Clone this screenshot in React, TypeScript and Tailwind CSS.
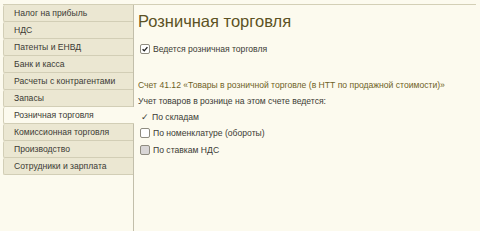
import React from "react";

const TABS = [
  "Налог на прибыль",
  "НДС",
  "Патенты и ЕНВД",
  "Банк и касса",
  "Расчеты с контрагентами",
  "Запасы",
  "Розничная торговля",
  "Комиссионная торговля",
  "Производство",
  "Сотрудники и зарплата",
];

const ACTIVE = "Розничная торговля";

function Box({ checked, gray }: { checked?: boolean; gray?: boolean }) {
  return (
    <span
      className={`grid h-[10px] w-[10px] shrink-0 place-items-center rounded-[2px] border border-[#8f8c80] ${
        gray ? "bg-[#d9d6d6]" : "bg-white"
      }`}
    >
      {checked ? (
        <svg viewBox="0 0 10 10" className="h-[8px] w-[8px]">
          <path d="M2 5.2 L4.1 7.3 L8 2.6" fill="none" stroke="#222" strokeWidth="1.7" />
        </svg>
      ) : null}
    </span>
  );
}

export default function App() {
  return (
    <div
      className="h-[231px] w-[480px] overflow-hidden bg-[#fcfaee] pl-[3px] pt-[4px] text-[8.6px] leading-[12px] text-[#3b3b35]"
      style={{ fontFamily: '"Liberation Sans", Arial, sans-serif' }}
    >
      <div className="flex h-full w-[473px] border-t border-[#d3cfb6]">
        <div className="flex w-[131px] shrink-0 flex-col border-r border-[#c2beaa]">
          {TABS.map((t) => {
            const on = t === ACTIVE;
            return (
              <div
                key={t}
                className={`flex h-[17px] items-center rounded-l-[2px] border-b border-l border-[#d2ceb6] pl-[10px] ${
                  on ? "-mr-px bg-[#fcfaee]" : "bg-[#ebe7d2]"
                }`}
              >
                {t}
              </div>
            );
          })}
        </div>

        <div className="flex flex-1 flex-col pl-[4px] pt-[6px]">
          <h1 className="text-[16.5px] leading-[20px] text-[#5c5224]">Розничная торговля</h1>

          <label className="mt-[12px] flex h-[12px] items-center gap-[3px] pl-[2px]">
            <Box checked />
            <span>Ведется розничная торговля</span>
          </label>

          <div className="mt-[22px] flex flex-col">
            <p className="flex h-[16px] items-center text-[#6f6226]">
              Счет 41.12 «Товары в розничной торговле (в НТТ по продажной стоимости)»
            </p>
            <p className="flex h-[16px] items-center">Учет товаров в рознице на этом счете ведется:</p>
            <div className="flex h-[16px] items-center gap-[4px] pl-[3px]">
              <span className="w-[7px] text-[9px]">✓</span>
              <span>По складам</span>
            </div>
            <div className="flex h-[16.5px] items-center gap-[3px] pl-[2px]">
              <Box />
              <span>По номенклатуре (обороты)</span>
            </div>
            <div className="flex h-[16.5px] items-center gap-[3px] pl-[2px]">
              <Box gray />
              <span>По ставкам НДС</span>
            </div>
          </div>
        </div>
      </div>
    </div>
  );
}
